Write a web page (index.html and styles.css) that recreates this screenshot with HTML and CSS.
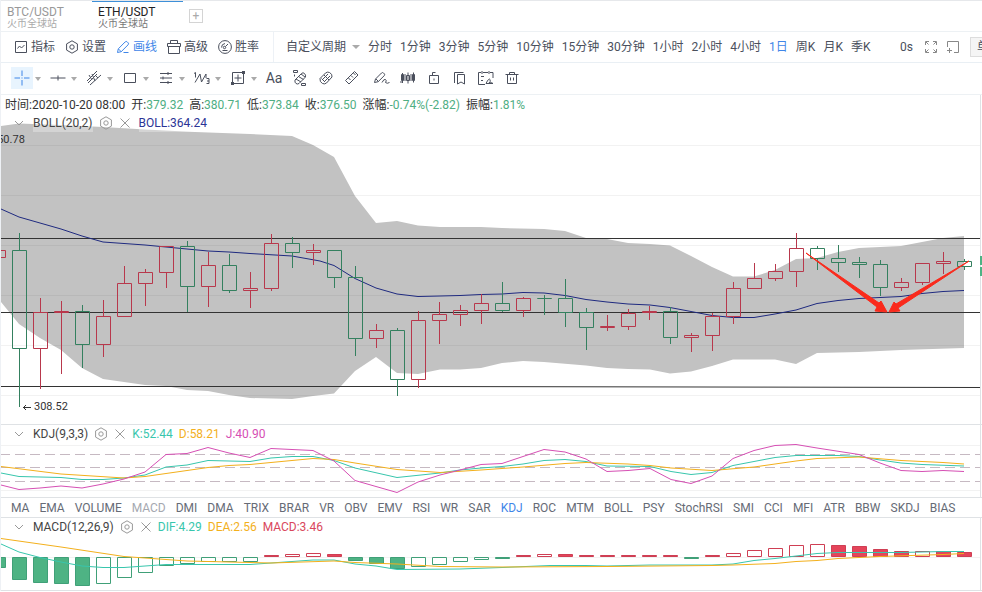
FILE: index.html
```
<!DOCTYPE html>
<html lang="zh-CN">
<head>
    <meta charset="UTF-8">
    <meta name="viewport" content="width=device-width, initial-scale=1.0">
    <title>ETH/USDT</title>
    <link rel="stylesheet" href="styles.css">
</head>
<body>
    <svg class="sprite" aria-hidden="true">
        <symbol id="hex" viewBox="0 0 14 14"><path d="M7 .8l5.4 3.1v6.2L7 13.2 1.6 10.1V3.9z"/><circle cx="7" cy="7" r="2.2"/></symbol>
        <symbol id="close" viewBox="0 0 12 12"><path d="M1.5 1.5l9 9M10.5 1.5l-9 9"/></symbol>
        <symbol id="chevron" viewBox="0 0 10 10"><path d="M1 3l4 4 4-4"/></symbol>
    </svg>

    <nav class="tabs">
        <a href="#btc" class="tab">BTC/USDT<small>火币全球站</small></a>
        <a href="#eth" class="tab current">ETH/USDT<small>火币全球站</small></a>
        <button type="button" class="add-tab" aria-label="添加">+</button>
    </nav>

    <header class="toolbar">
        <div class="menu">
            <button type="button"><svg class="icon" viewBox="0 0 14 14"><path d="M1.5 1.5h11v11h-11zM3.5 8.5l2-2.5 2 2 3-3"/></svg>指标</button>
            <button type="button"><svg class="icon"><use href="#hex"/></svg>设置</button>
            <button type="button" class="active"><svg class="icon" viewBox="0 0 14 14"><path d="M1.5 12.5l.8-3.7L9.2 1.9q1-1 2 0l.9.9q1 1 0 2L5.2 11.7zM2.5 9l2.8 2.8M7.5 12.5h5"/></svg>画线</button>
            <button type="button"><svg class="icon" viewBox="0 0 14 14"><path d="M.5 3.500h13v3H.5zM1.500 6.500v7h11v-7M3.500 3.500v-3h7v3"/></svg>高级</button>
            <button type="button"><svg class="icon" viewBox="0 0 14 14"><circle cx="7" cy="7" r="6.4"/><circle cx="6.500" cy="7.500" r="1.200"/><path d="M7.500 6.500L10 4M3.500 7.500Q3.500 4 7 3.500M4.500 10.500h5"/></svg>胜率</button>
        </div>
        <div class="periods">
            <button type="button">自定义周期<span class="caret"></span></button>
            <button type="button">分时</button>
            <button type="button">1分钟</button>
            <button type="button">3分钟</button>
            <button type="button">5分钟</button>
            <button type="button">10分钟</button>
            <button type="button">15分钟</button>
            <button type="button">30分钟</button>
            <button type="button">1小时</button>
            <button type="button">2小时</button>
            <button type="button">4小时</button>
            <button type="button" class="active">1日</button>
            <button type="button">周K</button>
            <button type="button">月K</button>
            <button type="button">季K</button>
        </div>
        <div class="window-tools">
            <span>0s</span>
            <button type="button" aria-label="全屏"><svg class="icon" viewBox="0 0 14 14"><path d="M1.5 5v-3.5H5M9 1.5h3.5V5M12.5 9v3.5H9M5 12.5H1.5V9M2 2l2.5 2.5M12 2L9.5 4.5M12 12L9.5 9.5M2 12l2.5-2.5"/></svg></button>
            <button type="button" aria-label="新窗口"><svg class="icon" viewBox="0 0 14 14"><path d="M1.5 7V1.5h11v11H8M1 10.5h5M3.5 8v5"/></svg></button>
            <button type="button" class="single">单</button>
        </div>
    </header>

    <div class="draw-bar">
        <button type="button" class="tool active" aria-label="十字线"><svg viewBox="0 0 16 16"><path d="M8 .5v5.500M8 10v5.500M.5 8H6M10 8h5.500M8 7.500v1"/></svg></button><span class="caret"></span>
        <button type="button" class="tool" aria-label="直线"><svg viewBox="0 0 16 16"><path d="M.5 8h15M8 5.5v5"/></svg></button><span class="caret"></span>
        <button type="button" class="tool" aria-label="通道"><svg viewBox="0 0 16 16"><path d="M1 11L11 1M4 15L15 5M3 5l3 5M6 4l3 7M9 5l3 3M2 13l9-9"/></svg></button><span class="caret"></span>
        <button type="button" class="tool" aria-label="矩形"><svg viewBox="0 0 16 16"><path d="M2.500 3.500h11v9h-11z"/></svg></button><span class="caret"></span>
        <button type="button" class="tool" aria-label="平行线"><svg viewBox="0 0 16 16"><path d="M2 3.5h12M2 8h12M2 12.5h12M10 2v3M5 6.5v3M10 11v3"/></svg></button><span class="caret"></span>
        <button type="button" class="tool" aria-label="波浪"><svg viewBox="0 0 16 16"><path d="M0 3.500l1.500-1v5M1 12.500L6 4l1.500 8L12 4v4M12.500 8.500h2.500v5h-2.500M13 11h2"/></svg></button><span class="caret"></span>
        <button type="button" class="tool" aria-label="测量"><svg viewBox="0 0 16 16"><path d="M2.5 2.5h11v11h-11zM8 4.500v7M4.500 8h7"/><path class="solid" d="M12 1h3v3h-3zM1 12h3v3H1z"/></svg></button><span class="caret"></span>
        <button type="button" class="tool" aria-label="文字">Aa</button>
        <button type="button" class="tool" aria-label="图形"><svg viewBox="0 0 16 16"><path d="M1.5 .5h4v2h-4zM9.500 13.500h4v2h-4zM2.500 4.500v2"/><path d="M3 10L9.500 3.500q1.500-1.500 3 0t1 3.500L7 13.500q-1.500 1-3 0t-1-3.500zM4 9l5 3M6.500 6.500l5 3M9 4l4 3"/></svg></button>
        <button type="button" class="tool" aria-label="磁吸"><svg viewBox="0 0 16 16"><path d="M2 8.5L7.5 3q2-1.500 4-.5 3 1.500 2.500 4.500L8.500 13q-2 1.500-4 .5Q1.500 12 2 8.500zM4 10L10 4M6 12l6-6M6 5l5 5M3.500 8.500L7 12"/></svg></button>
        <button type="button" class="tool" aria-label="尺子"><svg viewBox="0 0 16 16"><path d="M1.500 10.500l9-9 3.500 3.500-9 9zM4.500 8l2 2M7 5.500l2 2M9.500 3l2 2"/></svg></button>
        <span class="spacer"></span>
        <button type="button" class="tool" aria-label="画笔"><svg viewBox="0 0 16 16"><path d="M.5 12.500l1-3.500 6-6q1-1 2 0l.7.7q1 1 0 2l-6 6zM2 9l2.500 2.500M8 12.500q2-4 3.500-3t0 3q1.500 1.500 4 0"/></svg></button>
        <button type="button" class="tool" aria-label="K线"><svg viewBox="0 0 16 16"><path d="M1.500 4.500h2v6h-2zM6.500 5.500h3v5h-3zM12.500 4.500h2v6h-2zM2.500 3v10M8 2.500v11M13.500 2.500v10M0 12h3M5 4v7M11 4v7"/></svg></button>
        <button type="button" class="tool" aria-label="锁定"><svg viewBox="0 0 16 16"><path d="M3.500 5.500h9v8h-9zM6.500 5.500v-3h3M8 8.500v2"/></svg></button>
        <button type="button" class="tool" aria-label="收藏"><svg viewBox="0 0 16 16"><path d="M5.500 4.500h7v9.500l-3.500-2-3.500 2zM2.500 13V2.500h9"/></svg></button>
        <button type="button" class="tool" aria-label="日程"><svg viewBox="0 0 16 16"><path d="M7 14.500H.5v-12H3M5 2.500h5M12 2.500h3V8M4 1v3M11 1v3M3 6.500h3M3 10.500h2M8 13.500q3-6 4-4t-1 3.500q3-1 4 .5z"/></svg></button>
        <button type="button" class="tool" aria-label="删除"><svg viewBox="0 0 16 16"><path d="M1.500 4.500h13M5.500 4.500v-2h5v2M3.500 4.500v9h9v-9M6.500 7.500v3M9.500 7.500v3"/></svg></button>
    </div>

    <main>
        <section class="pane">
            <svg class="plot price" viewBox="0 95 982 329" preserveAspectRatio="none">
                <polygon class="band" points="1,126 19,123.5 61,125 103,127 145,129.500 195,132 250,134 292,136 313,145 334,157 355,196 376,223 397,221 418,225.5 440,227 481,227 502,228 544,229 565,231 586,238 607,239 628,243 650,244 670,245.5 691,256 712,267 733,276.5 754,276.5 775,270 796,259 817,258 838,252 859,248 901,246 922,242 943,238 964,236 964,348 901,350 859,352 817,353 796,364 775,359.5 733,359.5 712,366 691,371.5 670,373.5 650,369.5 628,369 607,368 586,365.5 544,362 523,361 502,363 481,368 460,369.5 440,369.5 418,374 397,373 376,357 355,371 334,393.5 313,396 292,399 250,398 229,395 208,391 187,390 166,386 145,385 103,379 82,368 61,350 40,338 19,324 1,302"/>
                <path class="grid" d="M0 145.5H980M0 195.5H980M0 245.5H980M0 295.5H980M0 345.5H980M0 395.5H980"/>
                <path class="level" d="M1 238.5H980M1 312.5H980M1 386.5H420L980 387.5"/>
                <polyline class="boll" points="1,209 19,217 40,223 61,229 82,236 103,242 124,243.5 145,245 166,247 187,249 208,251 229,252 250,253.5 292,256 320,261 334,265.5 355,278.5 376,288 397,294 418,296.5 440,296 460,295.5 481,294.5 502,294 523,292.5 544,293 565,295.5 586,299.5 607,302 628,304 650,305 670,307.5 691,311.5 712,315.5 733,317.5 754,317.5 775,314 796,310 817,303.5 838,300.5 859,298.5 901,296.5 922,293.5 943,291.5 964,290.5"/>
                <g id="candles"></g>
                <polygon class="arrow" points="806,253 879,303 881,301 887,312 875,311 877,307"/>
                <polygon class="arrow" points="969,261 896,304 894,302 889,312 900,311 898,308"/>
                <path class="axis" d="M980.5 95V424"/>
                <path class="price-tag" d="M980 256h2v9h-2zM980 267h2v9h-2z"/>
            </svg>
            <div class="legend main-legend">
                <p class="quote">
                    <span>时间:2020-10-20 08:00</span>
                    <span>开:<b>379.32</b></span>
                    <span>高:<b>380.71</b></span>
                    <span>低:<b>373.84</b></span>
                    <span>收:<b>376.50</b></span>
                    <span>涨幅:<b>-0.74%(-2.82)</b></span>
                    <span>振幅:<b>1.81%</b></span>
                </p>
                <div class="study">
                    <button type="button" class="fold" aria-label="收起"><svg><use href="#chevron"/></svg></button>
                    <span class="name shade">BOLL(20,2)</span>
                    <button type="button" class="set" aria-label="设置"><svg><use href="#hex"/></svg></button>
                    <button type="button" class="del" aria-label="关闭"><svg><use href="#close"/></svg></button>
                    <span class="navy shade">BOLL:364.24</span>
                </div>
            </div>
            <span class="mark high">350.78</span>
            <span class="mark low"><svg viewBox="0 0 9 9"><path d="M9 4.5H1M4 2L1.500 4.500 4 7"/></svg>308.52</span>
        </section>

        <section class="pane">
            <svg class="plot" viewBox="0 425 982 72" preserveAspectRatio="none">
                <path class="grid" d="M0 445.5H980M0 490.5H980"/>
                <path class="dash" d="M0 454.5H980M0 467.5H980M0 481.5H980"/>
                <polyline class="teal" points="1,473 19,476.5 61,477.5 82,479.5 103,479.5 124,478 145,475 166,467 187,465 208,460.5 250,461.5 271,458 292,456.5 313,456.5 334,460.5 355,468 397,477.5 440,473 460,470 481,468 502,466.5 523,464 544,460.5 565,459.5 586,461.5 607,466 650,466.5 671,471.5 691,474.5 712,472.5 733,465.5 775,457.5 796,455.5 838,455.5 859,456.5 880,460 901,463 922,464.5 964,466"/>
                <polyline class="amber" points="1,466.5 61,474 124,478 145,476.5 208,467.5 229,465.5 250,464.5 313,458.5 334,459.5 355,463 397,469.5 440,472.5 481,470 523,467 565,463.5 586,462.5 628,464 650,465.5 671,468 712,470.5 754,467 796,461 817,458.5 859,457 901,460.5 943,462.5 964,464"/>
                <polyline class="pink" points="1,485 19,489.5 40,488 61,486 82,488 103,484 124,479 145,472 166,454.5 187,453.5 208,447.5 229,453 250,457.5 271,448.5 313,450.5 334,461 355,480.5 397,492.5 418,482 440,475 460,470 481,464.5 502,463.5 523,456.5 544,449.5 565,452 586,459 607,471.5 628,470.5 650,468.5 671,479.5 691,483.5 712,476 733,458.5 754,450.5 775,445.5 796,444.5 817,448 859,454.5 880,463 901,470.5 922,471.5 943,470.5 964,471.5"/>
                <path class="axis" d="M980.5 425V497"/>
            </svg>
            <div class="legend">
                <div class="study">
                    <button type="button" class="fold" aria-label="收起"><svg><use href="#chevron"/></svg></button>
                    <span class="name">KDJ(9,3,3)</span>
                    <button type="button" class="set" aria-label="设置"><svg><use href="#hex"/></svg></button>
                    <button type="button" class="del" aria-label="关闭"><svg><use href="#close"/></svg></button>
                    <span class="k">K:52.44</span>
                    <span class="d">D:58.21</span>
                    <span class="j">J:40.90</span>
                </div>
            </div>
        </section>

        <nav class="indicators">
            <a href="#ma">MA</a>
            <a href="#ema">EMA</a>
            <a href="#volume">VOLUME</a>
            <a href="#macd" class="used">MACD</a>
            <a href="#dmi">DMI</a>
            <a href="#dma">DMA</a>
            <a href="#trix">TRIX</a>
            <a href="#brar">BRAR</a>
            <a href="#vr">VR</a>
            <a href="#obv">OBV</a>
            <a href="#emv">EMV</a>
            <a href="#rsi">RSI</a>
            <a href="#wr">WR</a>
            <a href="#sar">SAR</a>
            <a href="#kdj" class="active">KDJ</a>
            <a href="#roc">ROC</a>
            <a href="#mtm">MTM</a>
            <a href="#boll">BOLL</a>
            <a href="#psy">PSY</a>
            <a href="#stochrsi">StochRSI</a>
            <a href="#smi">SMI</a>
            <a href="#cci">CCI</a>
            <a href="#mfi">MFI</a>
            <a href="#atr">ATR</a>
            <a href="#bbw">BBW</a>
            <a href="#skdj">SKDJ</a>
            <a href="#bias">BIAS</a>
        </nav>

        <section class="pane">
            <svg class="plot" viewBox="0 518 982 72" preserveAspectRatio="none">
                <path class="grid" d="M0 557.5H980"/>
                <g id="bars"></g>
                <polyline class="teal" points="1,544 19,552 40,557.5 61,562 82,566 103,567.5 124,567.5 145,566 166,564.5 250,564.5 271,563 313,560 334,560 355,564 376,566 397,569.5 460,569 502,567.5 550,565.5 586,565.5 607,566 650,565 712,565 733,564 754,560.5 775,558.5 796,556 817,553.5 838,552.5 901,552.5 943,551.5 964,551.5"/>
                <polyline class="amber" points="1,538.5 61,547 124,556.5 187,561 271,563 334,561 355,562.5 397,564 440,566.5 502,567 607,566.5 712,565.5 733,565 775,563.5 796,561.5 817,560.5 838,558.5 880,556.5 943,554.5 964,553.5"/>
                <path class="axis" d="M980.5 518V590"/>
            </svg>
            <div class="legend">
                <div class="study">
                    <button type="button" class="fold" aria-label="收起"><svg><use href="#chevron"/></svg></button>
                    <span class="name">MACD(12,26,9)</span>
                    <button type="button" class="set" aria-label="设置"><svg><use href="#hex"/></svg></button>
                    <button type="button" class="del" aria-label="关闭"><svg><use href="#close"/></svg></button>
                    <span class="k">DIF:4.29</span>
                    <span class="d">DEA:2.56</span>
                    <span class="macd">MACD:3.46</span>
                </div>
            </div>
        </section>
    </main>
    <script src="chart.js"></script>
</body>
</html>
```
FILE: styles.css
```
* {
    box-sizing: border-box;
}

body {
    margin: 0;
    font-family: Roboto, "Noto Sans CJK SC", sans-serif;
    font-size: 12px;
    line-height: 18px;
    color: #4a4f5c;
    background: #fff;
    border-left: 1px solid #eef1f5;
    overflow-x: hidden;
}

button {
    font: inherit;
    color: inherit;
    background: none;
    border: 0;
    padding: 0;
    cursor: pointer;
    white-space: nowrap;
}

a {
    color: inherit;
    text-decoration: none;
}

svg {
    fill: none;
    stroke: currentColor;
    stroke-width: 1;
}

.sprite {
    position: absolute;
    width: 0;
    height: 0;
}

/* tabs */
.tabs {
    display: flex;
    align-items: flex-start;
    height: 32px;
    border-top: 1px solid #e6e8eb;
    border-bottom: 1px solid #edf1f4;
}

.tab {
    width: 91px;
    height: 30px;
    padding: 3px 6px 0;
    line-height: 14px;
    color: #999;
    border-top: 1px solid transparent;
}

.tab small {
    display: block;
    font-size: 10px;
    line-height: 10px;
    color: #aaa;
}

.tab.current {
    color: #222;
    border-top-color: #3d8fd8;
}

.tab.current small {
    color: #777;
}

.add-tab {
    width: 14px;
    height: 14px;
    margin: 8px 0 0 6px;
    line-height: 12px;
    color: #aaa;
    border: 1px solid #d4d4d4;
}

/* main toolbar */
.toolbar {
    display: flex;
    align-items: center;
    height: 31px;
    border-bottom: 1px solid #e9eff4;
    overflow: hidden;
}

.menu {
    display: flex;
    align-items: center;
    gap: 10px;
    height: 100%;
    padding: 0 14px 0 13px;
    border-right: 1px solid #edf1f6;
}

.menu button {
    display: flex;
    align-items: center;
    gap: 3px;
}

.icon {
    display: block;
    width: 14px;
    height: 14px;
}

.periods {
    display: flex;
    gap: 8px;
    padding-left: 12px;
}

.periods button {
    display: flex;
    align-items: center;
    gap: 6px;
}

.active {
    color: #3f86e8;
}

.caret {
    border: 4px solid transparent;
    border-top-color: #aaa;
    border-bottom: 0;
}

.window-tools {
    display: flex;
    align-items: center;
    gap: 8px;
    margin-left: auto;
    margin-right: -12px;
}

.window-tools span {
    margin-right: 3px;
}

.window-tools .icon {
    color: #888;
}

.single {
    width: 24px;
    height: 20px;
    padding-left: 6px;
    text-align: left;
    background: #f5f5f5;
    border: 1px solid #ddd;
    margin-left: 2px;
}

/* drawing tools */
.draw-bar {
    display: flex;
    align-items: center;
    height: 32px;
    padding: 0 0 2px 10px;
    border-bottom: 1px solid #edf1f4;
}

.tool {
    display: flex;
    align-items: center;
    justify-content: center;
    width: 22px;
    height: 22px;
    margin-right: 4px;
    font-size: 14px;
}

.tool svg {
    width: 16px;
    height: 16px;
}

.tool.active {
    background: #e8f4fe;
}

.tool .solid {
    fill: currentColor;
    stroke: none;
}

.draw-bar .caret {
    border-width: 4px 3px 0;
    margin: 3px 6px 0 -2px;
}

.spacer {
    width: 4px;
}

/* chart panes */
.pane {
    position: relative;
    overflow: hidden;
    border-bottom: 1px solid #dfe2e5;
}

.plot {
    display: block;
    width: calc(100% + 1px);
    height: 72px;
    margin-left: -1px;
}

.plot.price {
    height: 329px;
}

.grid {
    stroke: rgba(0, 0, 0, 0.05);
}

.band {
    fill: #c2c2c2;
    stroke: none;
}

.level {
    stroke: #333;
}

.boll {
    stroke: #1f2a80;
}

.dash {
    stroke: #c6b9c2;
    stroke-dasharray: 10 5;
}

.axis {
    stroke: #dfe2e5;
}

.teal {
    stroke: #38c6ad;
}

.amber {
    stroke: #f3b01c;
}

.pink {
    stroke: #d64fb4;
}

.arrow {
    fill: #fa2a1c;
    stroke: #fa2a1c;
}

.price-tag {
    fill: #4eb384;
    stroke: none;
}

.up {
    stroke: #b8384c;
}

.down {
    stroke: #34805f;
}

.bar-up {
    stroke: #cf3f54;
}

.bar-down {
    stroke: #40a078;
}

.bar-up.full {
    fill: #e5445a;
}

.bar-down.full {
    fill: #4eb384;
}

/* text over the charts */
.legend {
    position: absolute;
    top: 0;
    left: 0;
}

.main-legend {
    top: 1px;
}

.quote {
    display: flex;
    gap: 6px;
    margin: 0;
    padding-left: 4px;
    color: #333;
    white-space: nowrap;
}

.quote b {
    font-weight: 400;
    color: #4fae83;
}

.study {
    display: flex;
    align-items: center;
    gap: 6px;
    height: 18px;
    padding-left: 13px;
}

.study svg {
    display: block;
    width: 100%;
    height: 100%;
    color: #999;
}

.fold {
    width: 10px;
    height: 10px;
}

.name {
    margin-left: 3px;
    color: #444;
}

.shade {
    background: rgba(255, 255, 255, 0.3);
}

.set {
    width: 14px;
    height: 14px;
}

.del {
    width: 12px;
    height: 12px;
}

.navy {
    margin-left: 2px;
    color: #2b3596;
}

.k {
    color: #38c6ad;
}

.d {
    color: #f3b01c;
}

.j {
    color: #d64fb4;
}

.macd {
    color: #d9475c;
}

.mark {
    position: absolute;
    display: flex;
    align-items: center;
    gap: 3px;
    font-size: 11px;
    color: #333;
}

.mark svg {
    width: 9px;
    height: 9px;
}

.high {
    top: 36px;
    left: -10px;
}

.low {
    top: 303px;
    left: 21px;
}

/* indicator list */
.indicators {
    display: flex;
    gap: 10px;
    height: 20px;
    padding-left: 10px;
    line-height: 20px;
    color: #666b76;
    border-bottom: 1px solid #dfe2e5;
}

.indicators .used {
    color: #a5a8b0;
}

.indicators .active {
    color: #3f86e8;
}
```
FILE: chart.js
```
const STEP = 21;
const FIRST = -1.5;

// [direction, high, body top, body bottom, low]
const candles = [
    ['up', 250, 250.5, 257.5, 258],
    ['down', 233, 250.5, 348.5, 407],
    ['up', 298, 312.5, 348.5, 389],
    ['up', 301, 311.5, 312.5, 374],
    ['down', 305, 311.5, 344.5, 368],
    ['up', 300, 316.5, 344.5, 357],
    ['up', 266, 283.5, 316.5, 317],
    ['up', 269, 272.5, 283.5, 306],
    ['up', 246, 246.5, 272.5, 288],
    ['down', 241, 246.5, 286.5, 312],
    ['up', 252, 265.5, 286.5, 307],
    ['down', 254, 265.5, 290.5, 293],
    ['up', 272, 288.5, 290.5, 308],
    ['up', 234, 243.5, 288.5, 291],
    ['down', 237, 243.5, 252.5, 268],
    ['up', 244, 250.5, 252.5, 265],
    ['down', 250, 250.5, 277.5, 288],
    ['down', 266, 277.5, 338.5, 356],
    ['up', 324, 330.5, 338.5, 348],
    ['down', 328, 330.5, 379.5, 396],
    ['up', 311, 320.5, 379.5, 388],
    ['up', 302, 314.5, 320.5, 344],
    ['up', 305, 310.5, 314.5, 326],
    ['up', 294, 303.5, 310.5, 324],
    ['down', 282, 303.5, 310.5, 312],
    ['up', 297, 298.5, 310.5, 317],
    ['down', 295, 298.5, 298.5, 315],
    ['down', 279, 298.5, 312.5, 327],
    ['down', 308, 312.5, 327.5, 350],
    ['up', 315, 326.5, 327.5, 331],
    ['up', 309, 313.5, 326.5, 330],
    ['up', 306, 311.5, 312.5, 320],
    ['down', 307, 311.5, 337.5, 344],
    ['up', 333, 335.5, 337.5, 352],
    ['up', 313, 316.5, 335.5, 351],
    ['up', 282, 288.5, 316.5, 324],
    ['up', 263, 278.5, 288.5, 289],
    ['up', 264, 271.5, 278.5, 281],
    ['up', 233, 248.5, 271.5, 287],
    ['down', 246, 248.5, 258.5, 270],
    ['down', 245, 258.5, 262.5, 272],
    ['down', 257, 262.5, 264.5, 278],
    ['down', 260, 264.5, 287.5, 296],
    ['up', 278, 282.5, 287.5, 291],
    ['up', 263, 263.5, 282.5, 285],
    ['up', 252, 261.5, 263.5, 274],
    ['down', 259, 261.5, 266.5, 270]
];

// [direction, end of bar, filled]
const bars = [
    ['down', 567.5, 1], ['down', 579.5, 1], ['down', 582.5, 1], ['down', 583.5, 1], ['down', 585.5, 1],
    ['down', 583.5, 0], ['down', 577.5, 0], ['down', 572.5, 0], ['down', 565.5, 0], ['down', 563.5, 0],
    ['down', 561.5, 0], ['down', 561.5, 0], ['down', 561.5, 0], ['up', 555.5, 1], ['up', 554.5, 0],
    ['up', 553.5, 0], ['up', 554.5, 1], ['down', 560.5, 1], ['down', 563.5, 1], ['down', 568.5, 1],
    ['down', 566.5, 0], ['down', 564.5, 0], ['down', 561.5, 0], ['down', 559.5, 0], ['down', 557.5, 1],
    ['up', 555.5, 1], ['up', 554.5, 0], ['up', 554.5, 1], ['up', 555.5, 1], ['up', 555.5, 1],
    ['up', 555.5, 1], ['up', 555.5, 1], ['up', 555.5, 1], ['down', 557.5, 1], ['up', 555.5, 1],
    ['up', 553.5, 0], ['up', 550.5, 0], ['up', 548.5, 0], ['up', 545.5, 0], ['up', 544.5, 0],
    ['up', 545.5, 1], ['up', 546.5, 1], ['up', 549.5, 1], ['up', 551.5, 1], ['up', 551.5, 0],
    ['up', 551.5, 1], ['up', 552.5, 1]
];

document.getElementById('candles').innerHTML = candles.map(([dir, high, top, bottom, low], i) => {
    const x = FIRST + i * STEP;
    return `<path class="${dir}" d="M${x} ${high}V${top}M${x} ${bottom}V${low}M${x - 7} ${top}h14V${bottom}h-14z"/>`;
}).join('');

document.getElementById('bars').innerHTML = bars.map(([dir, end, full], i) => {
    const x = FIRST + i * STEP;
    const base = dir === 'up' || end < 557 ? 556.5 : 557.5;
    const bottom = end === base ? end + 1 : end;
    return `<path class="bar-${dir}${full ? ' full' : ''}" d="M${x - 7} ${base}h14V${bottom}h-14z"/>`;
}).join('');
```
